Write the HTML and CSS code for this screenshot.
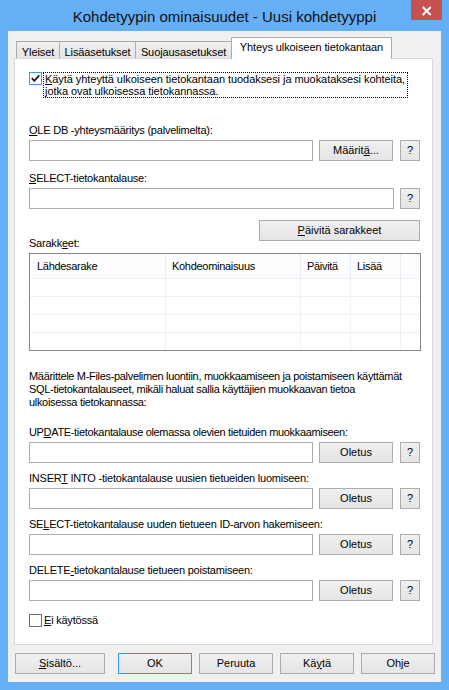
FILE: index.html
```html
<!DOCTYPE html>
<html lang="fi">
<head>
<meta charset="utf-8">
<title>Kohdetyypin ominaisuudet</title>
<link rel="stylesheet" href="styles.css">
</head>
<body>
<div class="window">
  <div class="titlebar">
    <span class="title">Kohdetyypin ominaisuudet - Uusi kohdetyyppi</span>
    <div class="close"><svg width="31" height="20" viewBox="0 0 31 20"><path d="M11.7 7 L19.7 15 M19.7 7 L11.7 15" stroke="#fff" stroke-width="2" fill="none"/></svg></div>
  </div>
  <div class="client">
    <div class="tabs">
      <div class="tab t1">Yleiset</div>
      <div class="tab t2">Lisäasetukset</div>
      <div class="tab t3">Suojausasetukset</div>
      <div class="tab t4 active">Yhteys ulkoiseen tietokantaan</div>
    </div>
    <div class="panel">
      <div class="top-check">
        <span class="checkbox checked"><svg width="11" height="11" viewBox="0 0 11 11"><path d="M1.8 5.2 L4.3 7.8 L9.2 2.4" stroke="#1f1f1f" stroke-width="1.9" fill="none"/></svg></span>
        <span class="focus-text"><u>K</u>äytä yhteyttä ulkoiseen tietokantaan tuodaksesi ja muokataksesi kohteita,<br>jotka ovat ulkoisessa tietokannassa.</span>
      </div>

      <div class="label lbl-ole"><u>O</u>LE DB -yhteysmääritys (palvelimelta):</div>
      <div class="row">
        <input class="input short" type="text">
        <button class="btn mid">Määrit<u>ä</u>...</button>
        <button class="btn help">?</button>
      </div>

      <div class="label lbl-select"><u>S</u>ELECT-tietokantalause:</div>
      <div class="row">
        <input class="input long" type="text">
        <button class="btn help">?</button>
      </div>

      <div class="cols-row">
        <span class="cols-label">Sarakk<u>e</u>et:</span>
        <button class="btn refresh"><u>P</u>äivitä sarakkeet</button>
      </div>

      <div class="list">
        <div class="lrow head">
          <div class="cell c1">Lähdesarake</div>
          <div class="cell c2">Kohdeominaisuus</div>
          <div class="cell c3">Päivitä</div>
          <div class="cell c4">Lisää</div>
          <div class="cell c5"></div>
        </div>
        <div class="lrow"><div class="cell c1"></div><div class="cell c2"></div><div class="cell c3"></div><div class="cell c4"></div><div class="cell c5"></div></div>
        <div class="lrow"><div class="cell c1"></div><div class="cell c2"></div><div class="cell c3"></div><div class="cell c4"></div><div class="cell c5"></div></div>
        <div class="lrow"><div class="cell c1"></div><div class="cell c2"></div><div class="cell c3"></div><div class="cell c4"></div><div class="cell c5"></div></div>
        <div class="lrow"><div class="cell c1"></div><div class="cell c2"></div><div class="cell c3"></div><div class="cell c4"></div><div class="cell c5"></div></div>
      </div>

      <p class="para">Määrittele M-Files-palvelimen luontiin, muokkaamiseen ja poistamiseen käyttämät<br>SQL-tietokantalauseet, mikäli haluat sallia käyttäjien muokkaavan tietoa<br>ulkoisessa tietokannassa:</p>

      <div class="label lbl-update">UP<u>D</u>ATE-tietokantalause olemassa olevien tietuiden muokkaamiseen:</div>
      <div class="row">
        <input class="input short" type="text">
        <button class="btn mid">Oletus</button>
        <button class="btn help">?</button>
      </div>

      <div class="label lbl-group">INSER<u>T</u> INTO -tietokantalause uusien tietueiden luomiseen:</div>
      <div class="row">
        <input class="input short" type="text">
        <button class="btn mid">Oletus</button>
        <button class="btn help">?</button>
      </div>

      <div class="label lbl-group">SE<u>L</u>ECT-tietokantalause uuden tietueen ID-arvon hakemiseen:</div>
      <div class="row">
        <input class="input short" type="text">
        <button class="btn mid">Oletus</button>
        <button class="btn help">?</button>
      </div>

      <div class="label lbl-group">DELETE<u>-</u>tietokantalause tietueen poistamiseen:</div>
      <div class="row">
        <input class="input short" type="text">
        <button class="btn mid">Oletus</button>
        <button class="btn help">?</button>
      </div>

      <div class="bottom-check">
        <span class="checkbox"></span>
        <span class="check-label"><u>E</u>i käytössä</span>
      </div>
    </div>
    <div class="buttons">
      <button class="btn dlg contents"><u>S</u>isältö...</button>
      <button class="btn dlg default">OK</button>
      <button class="btn dlg">Peruuta</button>
      <button class="btn dlg">Kä<u>y</u>tä</button>
      <button class="btn dlg">Ohje</button>
    </div>
  </div>
</div>
</body>
</html>
```

FILE: styles.css
```css
* {
  box-sizing: border-box;
}

html,
body {
  margin: 0;
  padding: 0;
}

body {
  width: 449px;
  height: 690px;
  overflow: hidden;
  background: #64aff5;
  font-family: "Liberation Sans", Arial, sans-serif;
  font-size: 11px;
  color: #000;
}

.window {
  position: relative;
  width: 449px;
  height: 690px;
  background: #64aff5;
  display: flex;
  flex-direction: column;
}

.titlebar {
  height: 31px;
  padding-top: 1px;
  display: flex;
  align-items: center;
  justify-content: center;
  font-size: 15px;
  color: #111;
}

.close {
  position: absolute;
  left: 411px;
  top: 0;
  width: 31px;
  height: 20px;
  background: #c75050;
}

.close svg {
  display: block;
}

.client {
  margin: 0 8px;
  height: 651px;
  background: #f0f0f0;
  padding: 6px 8px 0 6px;
}

/* Tabs */
.tabs {
  position: relative;
  z-index: 1;
  display: flex;
  align-items: flex-end;
  height: 21px;
  margin-left: 2px;
}

.tab {
  height: 17px;
  padding-top: 3px;
  line-height: 14px;
  border: 1px solid #acacac;
  border-bottom: none;
  background: linear-gradient(#f0f0f0, #e5e5e5);
  text-align: center;
  white-space: nowrap;
  margin-right: -1px;
  letter-spacing: -0.1px;
}

.t1 { width: 44px; }
.t2 { width: 77px; }
.t3 { width: 97px; }
.t4 { width: 161px; }

.tab.active {
  height: 22px;
  padding-top: 2px;
  margin-bottom: -1px;
  background: #fff;
}

/* Panel */
.panel {
  width: 419px;
  height: 587px;
  border: 1px solid #d9d9d9;
  background: #fff;
  padding-left: 14px;
  letter-spacing: -0.22px;
}

.top-check {
  margin-top: 13px;
  display: flex;
  align-items: flex-start;
}

.checkbox {
  display: block;
  flex: none;
  width: 13px;
  height: 13px;
  border: 1px solid #707070;
  background: #fff;
}

.checkbox.checked {
  border-color: #3399ff;
  margin-right: 1px;
}

.checkbox svg {
  display: block;
}

.focus-text {
  display: block;
  width: 365px;
  border: 1px dotted #000;
  padding: 0 1px;
  line-height: 12px;
  white-space: nowrap;
  letter-spacing: -0.06px;
}

.label {
  line-height: 13px;
  margin-bottom: 3px;
  white-space: nowrap;
}

.lbl-ole { margin-top: 26px; }
.lbl-select { margin-top: 11px; }
.lbl-update { margin-top: 17px; letter-spacing: -0.34px; }
.lbl-group { margin-top: 9px; }

.row {
  display: flex;
  height: 21px;
}

.input {
  display: block;
  height: 21px;
  margin: 0;
  padding: 0 2px;
  border: 1px solid #abadb3;
  background: #fff;
  font: inherit;
  outline: none;
}

.input.short {
  width: 284px;
  margin-right: 6px;
}

.input.long {
  width: 365px;
  margin-right: 6px;
}

.btn {
  display: block;
  height: 21px;
  margin: 0;
  padding: 0;
  border: 1px solid #acacac;
  background: linear-gradient(#f0f0f0, #e5e5e5);
  font: inherit;
  color: #000;
  line-height: 19px;
  text-align: center;
  white-space: nowrap;
  letter-spacing: 0;
}

.btn.mid {
  width: 74px;
  margin-right: 7px;
}

.btn.help {
  width: 20px;
}

.cols-row {
  margin-top: 11px;
  width: 391px;
  height: 30px;
  display: flex;
  justify-content: space-between;
}

.cols-label {
  align-self: flex-end;
  line-height: 13px;
}

.btn.refresh {
  width: 161px;
  align-self: flex-start;
}

/* List */
.list {
  margin-top: 3px;
  width: 392px;
  border: 1px solid #828790;
  background: #fff;
}

.lrow {
  display: flex;
  height: 18px;
  border-bottom: 1px solid #f0f0f0;
}

.lrow:last-child {
  border-bottom: none;
  height: 17px;
}

.lrow.head {
  height: 25px;
  background: #fdfdfd;
  border-bottom: 1px solid #e8eef6;
  line-height: 24px;
  letter-spacing: -0.3px;
}

.cell {
  flex: none;
  border-right: 1px solid #f0f0f0;
  padding-left: 6px;
  white-space: nowrap;
}

.head .cell {
  border-right-color: #e3ebf5;
}

.c1 { width: 136px; padding-left: 7px; }
.c2 { width: 135px; }
.c3 { width: 50px; }
.c4 { width: 50px; }
.c5 { flex: 1; border-right: none; }

.para {
  margin: 19px 0 0;
  line-height: 13px;
  white-space: nowrap;
  letter-spacing: -0.32px;
}

.bottom-check {
  margin-top: 13px;
  display: flex;
  align-items: center;
  line-height: 13px;
}

.bottom-check .checkbox {
  margin-right: 2px;
}

/* Dialog buttons */
.buttons {
  display: flex;
  margin-top: 8px;
  margin-left: 1px;
  width: 420px;
  gap: 7px;
}

.btn.dlg {
  width: 74px;
}

.btn.contents {
  width: 90px;
  margin-right: 6px;
}

.btn.default {
  border-color: #3399ff;
}
```
